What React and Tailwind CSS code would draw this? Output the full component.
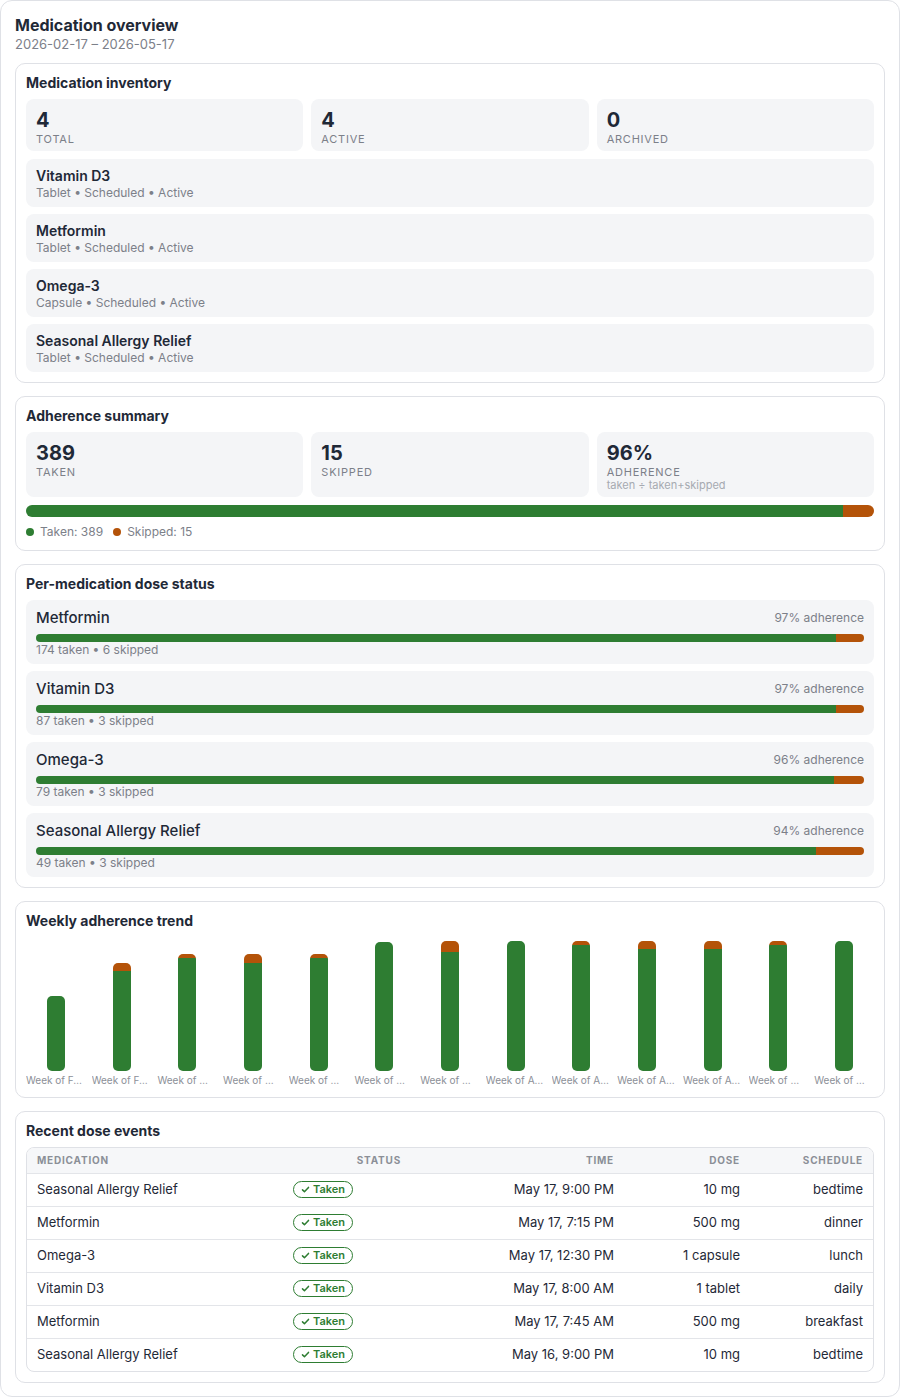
import React from "react";

const GREEN = "bg-[#2e7d32]";
const ORANGE = "bg-[#b45309]";

const inventory = [
  { name: "Vitamin D3", form: "Tablet" },
  { name: "Metformin", form: "Tablet" },
  { name: "Omega-3", form: "Capsule" },
  { name: "Seasonal Allergy Relief", form: "Tablet" },
];

const perMed = [
  { name: "Metformin", taken: 174, skipped: 6, pct: 97 },
  { name: "Vitamin D3", taken: 87, skipped: 3, pct: 97 },
  { name: "Omega-3", taken: 79, skipped: 3, pct: 96 },
  { name: "Seasonal Allergy Relief", taken: 49, skipped: 3, pct: 94 },
];

// bar heights in px: [total, skipped]
const weeks = [
  ["Week of Feb 16", 75, 0],
  ["Week of Feb 23", 108, 8],
  ["Week of Mar 2", 117, 4],
  ["Week of Mar 9", 117, 9],
  ["Week of Mar 16", 117, 4],
  ["Week of Mar 23", 129, 0],
  ["Week of Mar 30", 130, 11],
  ["Week of Apr 6", 130, 0],
  ["Week of Apr 13", 130, 4],
  ["Week of Apr 20", 130, 8],
  ["Week of Apr 27", 130, 8],
  ["Week of May 4", 130, 4],
  ["Week of May 11", 130, 0],
];

const events = [
  ["Seasonal Allergy Relief", "May 17, 9:00 PM", "10 mg", "bedtime"],
  ["Metformin", "May 17, 7:15 PM", "500 mg", "dinner"],
  ["Omega-3", "May 17, 12:30 PM", "1 capsule", "lunch"],
  ["Vitamin D3", "May 17, 8:00 AM", "1 tablet", "daily"],
  ["Metformin", "May 17, 7:45 AM", "500 mg", "breakfast"],
  ["Seasonal Allergy Relief", "May 16, 9:00 PM", "10 mg", "bedtime"],
];

function Section({ title, children }) {
  return (
    <section className="rounded-[10px] border border-[#dfe1e6] bg-white p-2.5">
      <h2 className="mb-[7px] text-[14px] font-bold leading-[18px] text-[#1f2937]">{title}</h2>
      {children}
    </section>
  );
}

function Stat({ value, label, note }) {
  return (
    <div className="rounded-lg bg-[#f4f5f7] px-2.5 pt-[9px] pb-[5px]">
      <div className="text-[20px] font-bold leading-6 text-[#1f2937]">{value}</div>
      <div className="text-[11px] uppercase leading-[14px] tracking-[0.07em] text-[#7c8089]">{label}</div>
      {note && <div className="text-[11px] leading-[13px] text-[#a6aab1]">{note}</div>}
    </div>
  );
}

function SplitBar({ taken, skipped, h }) {
  const pct = (taken / (taken + skipped)) * 100;
  return (
    <div className={`flex w-full overflow-hidden rounded-full ${h}`}>
      <div className={GREEN} style={{ width: pct + "%" }} />
      <div className={`flex-1 ${ORANGE}`} />
    </div>
  );
}

function TakenBadge() {
  return (
    <span className="inline-flex items-center gap-[3px] rounded-full border border-[#2e7d32] px-[7px] text-[11px] font-semibold leading-[15px] text-[#2e7d32]">
      <svg width="9" height="9" viewBox="0 0 12 12" fill="none">
        <path d="M2 6.5l2.6 2.6L10 3.2" stroke="#2e7d32" strokeWidth="2" strokeLinecap="round" strokeLinejoin="round" />
      </svg>
      Taken
    </span>
  );
}

export default function App() {
  return (
    <div className="min-h-screen bg-white" style={{ fontFamily: "Inter, 'Liberation Sans', sans-serif" }}>
      <div className="rounded-xl border border-[#dfe1e6] bg-white px-[14px] pt-[14px] pb-[13px]">
        <h1 className="text-[16px] font-bold leading-5 text-[#1f2937]">Medication overview</h1>
        <p className="mb-[10px] text-[13px] leading-[18px] text-[#7c8089]">2026-02-17 – 2026-05-17</p>

        <div className="flex flex-col gap-[13px]">
          <Section title="Medication inventory">
            <div className="grid grid-cols-3 gap-2">
              <Stat value="4" label="Total" />
              <Stat value="4" label="Active" />
              <Stat value="0" label="Archived" />
            </div>
            <div className="mt-2 flex flex-col gap-[7px]">
              {inventory.map((m) => (
                <div key={m.name} className="flex h-12 flex-col justify-center rounded-lg bg-[#f4f5f7] px-2.5">
                  <div className="text-[14px] font-semibold leading-[18px] text-[#1f2937]">{m.name}</div>
                  <div className="text-[12px] leading-[15px] text-[#7c8089]">{m.form} • Scheduled • Active</div>
                </div>
              ))}
            </div>
          </Section>

          <Section title="Adherence summary">
            <div className="grid grid-cols-3 gap-2">
              <Stat value="389" label="Taken" />
              <Stat value="15" label="Skipped" />
              <Stat value="96%" label="Adherence" note="taken ÷ taken+skipped" />
            </div>
            <div className="mt-2">
              <SplitBar taken={389} skipped={15} h="h-3" />
            </div>
            <div className="mt-[7px] flex items-center gap-2.5 text-[12px] leading-4 text-[#7c8089]">
              <span className="flex items-center gap-1.5">
                <span className={`h-2 w-2 rounded-full ${GREEN}`} />
                Taken: 389
              </span>
              <span className="flex items-center gap-1.5">
                <span className={`h-2 w-2 rounded-full ${ORANGE}`} />
                Skipped: 15
              </span>
            </div>
          </Section>

          <Section title="Per-medication dose status">
            <div className="flex flex-col gap-[7px]">
              {perMed.map((m) => (
                <div key={m.name} className="rounded-lg bg-[#f4f5f7] px-2.5 pt-2 pb-1.5">
                  <div className="flex h-5 items-center justify-between">
                    <span className="text-[15px] font-medium leading-5 text-[#1f2937]">{m.name}</span>
                    <span className="text-[12px] leading-4 text-[#7c8089]">{m.pct}% adherence</span>
                  </div>
                  <div className="mt-1.5">
                    <SplitBar taken={m.taken} skipped={m.skipped} h="h-2" />
                  </div>
                  <div className="text-[12px] leading-4 text-[#7c8089]">
                    {m.taken} taken • {m.skipped} skipped
                  </div>
                </div>
              ))}
            </div>
          </Section>

          <Section title="Weekly adherence trend">
            <div className="flex gap-[6px]">
              {weeks.map(([label, total, skipped]) => (
                <div key={label} className="flex min-w-0 flex-1 flex-col">
                  <div className="flex h-[134px] items-end justify-center">
                    <div className="flex w-[18px] flex-col overflow-hidden rounded-[5px]" style={{ height: total }}>
                      <div className={ORANGE} style={{ height: skipped }} />
                      <div className={`flex-1 ${GREEN}`} />
                    </div>
                  </div>
                  <div className="mt-[2px] w-[58px] truncate text-[10px] leading-[14px] text-[#8b8f97]">{label}</div>
                </div>
              ))}
            </div>
          </Section>

          <Section title="Recent dose events">
            <div className="overflow-hidden rounded-lg border border-[#dfe1e6]">
              <table className="w-full table-fixed border-collapse text-[13px] text-[#1f2937]">
                <colgroup>
                  <col className="w-[256px]" />
                  <col className="w-[128px]" />
                  <col className="w-[213px]" />
                  <col className="w-[126px]" />
                  <col />
                </colgroup>
                <thead>
                  <tr className="bg-[#f6f7f9] text-[10px] font-bold uppercase tracking-[0.08em] text-[#8b8f97]">
                    <th className="h-[25px] px-2.5 text-left font-bold">Medication</th>
                    <th className="px-2.5 text-right font-bold">Status</th>
                    <th className="px-2.5 text-right font-bold">Time</th>
                    <th className="px-2.5 text-right font-bold">Dose</th>
                    <th className="px-2.5 text-right font-bold">Schedule</th>
                  </tr>
                </thead>
                <tbody>
                  {events.map(([name, time, dose, sched], i) => (
                    <tr key={i} className="border-t border-[#e3e5e9]">
                      <td className="h-[33px] px-2.5">{name}</td>
                      <td className="px-2.5">
                        <TakenBadge />
                      </td>
                      <td className="px-2.5 text-right">{time}</td>
                      <td className="px-2.5 text-right">{dose}</td>
                      <td className="px-2.5 text-right">{sched}</td>
                    </tr>
                  ))}
                </tbody>
              </table>
            </div>
          </Section>
        </div>
      </div>
    </div>
  );
}
